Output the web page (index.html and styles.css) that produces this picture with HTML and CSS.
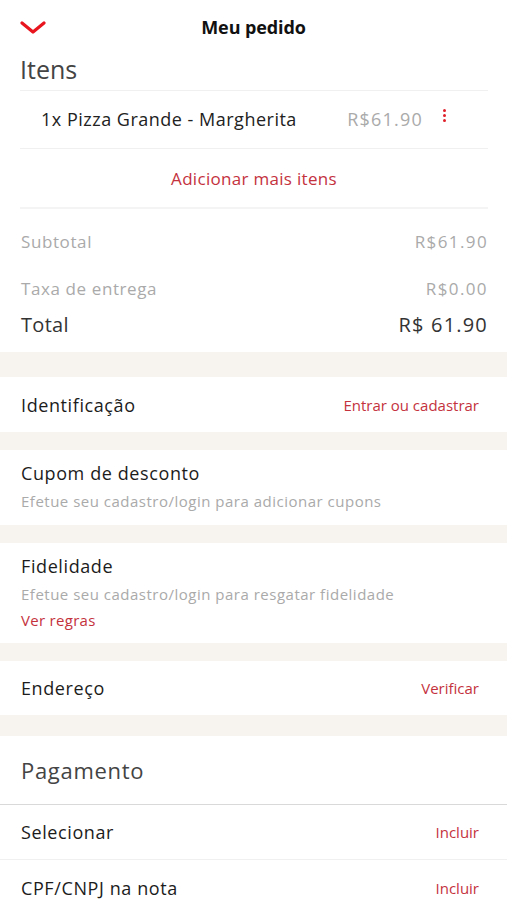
FILE: index.html
```html
<!DOCTYPE html>
<html lang="pt-BR">
<head>
<meta charset="utf-8">
<title>Meu pedido</title>
<link rel="stylesheet" href="styles.css">
</head>
<body>
<div class="page">
  <header class="topbar">
    <svg class="back" width="26" height="14" viewBox="0 0 26 14"><path d="M2 2 L13 11 L24 2" fill="none" stroke="#e8141e" stroke-width="3.2" stroke-linecap="round" stroke-linejoin="round"/></svg>
    <h1 class="title">Meu pedido</h1>
  </header>

  <section class="items">
    <h2 class="section-title">Itens</h2>
    <div class="item-row">
      <span class="item-name">1x Pizza Grande - Margherita</span>
      <span class="item-price num">R$61.90</span>
      <span class="kebab"><i></i><i></i><i></i></span>
    </div>
    <div class="add-more">Adicionar mais itens</div>
  </section>

  <section class="totals">
    <div class="line muted"><span>Subtotal</span><span class="num">R$61.90</span></div>
    <div class="line muted tax"><span>Taxa de entrega</span><span class="num">R$0.00</span></div>
    <div class="line total"><span>Total</span><span class="num">R$ 61.90</span></div>
  </section>

  <div class="band band-a"></div>
  <div class="row ident"><span class="label">Identificação</span><span class="link">Entrar ou cadastrar</span></div>
  <div class="band"></div>
  <div class="block cupom">
    <div class="label">Cupom de desconto</div>
    <div class="sub">Efetue seu cadastro/login para adicionar cupons</div>
  </div>
  <div class="band"></div>
  <div class="block fidel">
    <div class="label">Fidelidade</div>
    <div class="sub">Efetue seu cadastro/login para resgatar fidelidade</div>
    <div class="link rules">Ver regras</div>
  </div>
  <div class="band"></div>
  <div class="row endereco"><span class="label">Endereço</span><span class="link">Verificar</span></div>
  <div class="band band-b"></div>
  <div class="pay-title">Pagamento</div>
  <div class="row pay"><span class="label">Selecionar</span><span class="link">Incluir</span></div>
  <div class="row cpf"><span class="label">CPF/CNPJ na nota</span><span class="link">Incluir</span></div>
</div>
</body>
</html>
```

FILE: styles.css
```css
* { box-sizing: border-box; margin: 0; padding: 0; }
html, body { background: #ffffff; }
body {
  margin: 0;
  font-family: "Open Sans", "Lato", "Noto Sans", "Liberation Sans", sans-serif;
  color: #222;
}
.page { width: 507px; }

.topbar {
  position: relative;
  height: 52px;
  display: flex;
  align-items: center;
  justify-content: center;
}
.back { position: absolute; left: 20px; top: 21px; }
.title {
  font-size: 18px;
  font-weight: 700;
  color: #111;
  margin-top: 2px;
  letter-spacing: -0.1px;
}

.items { padding: 0 19px 0 20px; }
.section-title {
  font-size: 25px;
  font-weight: 400;
  color: #444;
  height: 39px;
  line-height: 35px;
  border-bottom: 1px solid #f0f0f0;
}
.item-row {
  display: flex;
  align-items: center;
  height: 58px;
  padding-left: 21px;
  padding-bottom: 2px;
  border-bottom: 1px solid #f0f0f0;
  font-size: 18px;
  letter-spacing: 0.5px;
}
.item-name { color: #222; flex: 1; }
.item-price { color: #aaa; margin-right: 20px; }
.num { letter-spacing: 1.2px; }
.kebab {
  display: flex;
  flex-direction: column;
  gap: 2px;
  width: 3px;
  margin-right: 42px;
  margin-top: -6px;
}
.kebab i { display: block; width: 3px; height: 3px; border-radius: 50%; background: #e0202a; }
.add-more {
  height: 60px;
  display: flex;
  align-items: center;
  justify-content: center;
  color: #c4323e;
  font-size: 17px;
  letter-spacing: 0.3px;
  border-bottom: 2px solid #f4f4f4;
}

.totals { padding: 14px 20px 10px 21px; }
.line {
  display: flex;
  justify-content: space-between;
  align-items: center;
  font-size: 17px;
  letter-spacing: 0.6px;
  height: 36px;
}
.line.muted { color: #aaa; }
.line .num { letter-spacing: 1.4px; margin-right: -1px; }
.line.tax { margin-top: 11px; }
.line.total { font-size: 20px; color: #333; height: 36px; letter-spacing: 0.3px; }
.line.total .num { letter-spacing: 1.2px; }

.band { height: 18px; background: #f7f3ef; }
.band-a { height: 25px; }
.band-b { height: 21px; }

.row {
  display: flex;
  justify-content: space-between;
  align-items: center;
  padding: 0 28px 0 21px;
  height: 55px;
}
.label { font-size: 18px; color: #1c1c1c; letter-spacing: 0.6px; }
.link { font-size: 15px; color: #c4323e; }
.block { padding: 11px 21px 0; }
.cupom { height: 75px; }
.fidel { height: 100px; }
.block .label { line-height: 24px; }
.block .sub { font-size: 15px; color: #aaa; margin-top: 5px; line-height: 22px; letter-spacing: 0.5px; }
.block .rules { margin-top: 4px; line-height: 22px; letter-spacing: 0.3px; }
.endereco { height: 54px; }

.pay-title {
  height: 69px;
  display: flex;
  align-items: center;
  padding-left: 21px;
  font-size: 22px;
  color: #444;
  letter-spacing: 0.7px;
  border-bottom: 1px solid #d9d9d9;
}
.pay { border-bottom: 1px solid #f0f0f0; }
```
